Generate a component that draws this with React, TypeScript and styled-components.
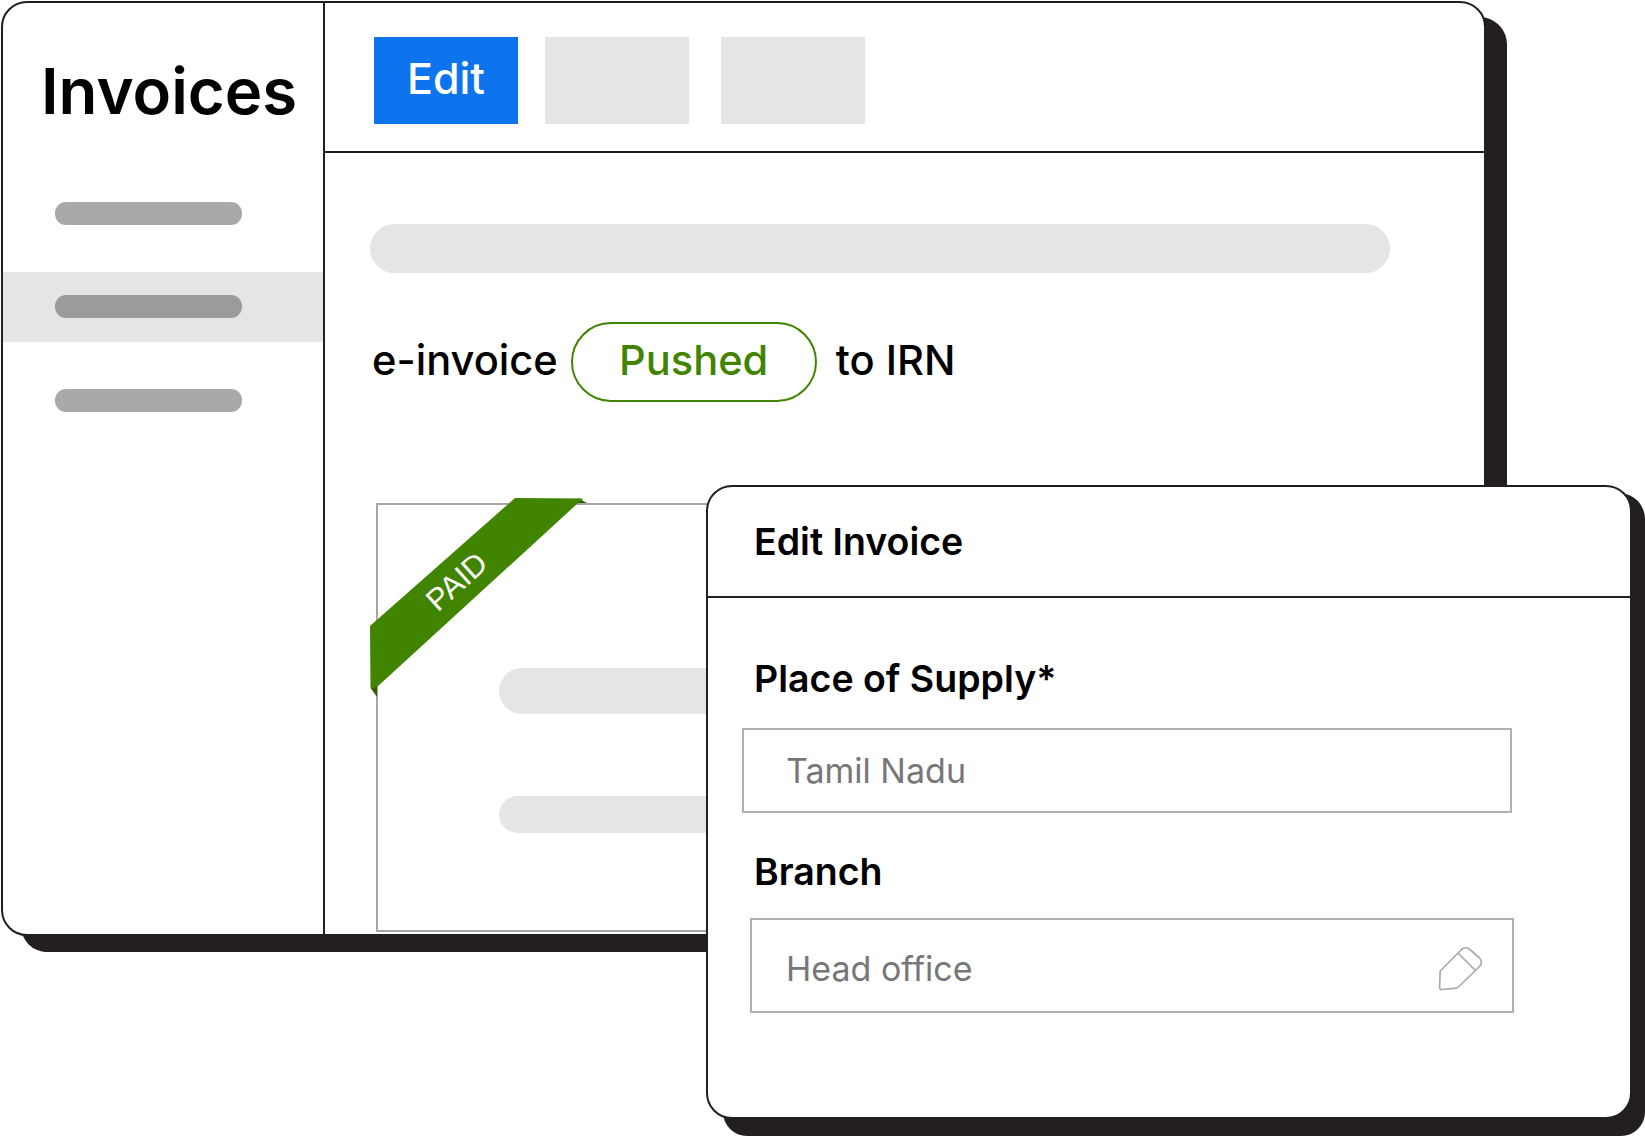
import React from 'react'
import styled, { createGlobalStyle } from 'styled-components'

const GlobalStyle = createGlobalStyle`
  html, body {
    margin: 0;
    padding: 0;
    background: #fff;
  }
  * {
    box-sizing: border-box;
  }
`

const App = () => {
  return (
    <>
      <GlobalStyle />
      <Scene>
        <MainWindow>
          <Sidebar>
            <Title>Invoices</Title>
            <NavList>
              <NavRow><NavBar /></NavRow>
              <NavRow $active><NavBar $active /></NavRow>
              <NavRow><NavBar /></NavRow>
            </NavList>
          </Sidebar>

          <Content>
            <Toolbar>
              <EditButton>Edit</EditButton>
              <GhostButton />
              <GhostButton $left={5} />
            </Toolbar>

            <Body>
              <LongBar />
              <StatusRow>
                <StatusText>e-invoice</StatusText>
                <Pill><StatusText>Pushed</StatusText></Pill>
                <StatusText>to IRN</StatusText>
              </StatusRow>

              <Paper>
                <Ribbon>
                  <svg width="222" height="205" viewBox="0 0 222 205">
                    <polygon points="208,0 217,5 205,5" fill="#2f6100" />
                    <polygon points="0.6,190 7,186 7,199" fill="#2f6100" />
                    <polygon points="145,0 213,0.5 7,189 0.5,190 0,128" fill="#418400" />
                  </svg>
                  <RibbonLabel>PAID</RibbonLabel>
                </Ribbon>
                <PaperBar $height={46} $top={163} />
                <PaperBar $height={37} $top={82} />
              </Paper>
            </Body>
          </Content>
        </MainWindow>

        <Dialog>
          <DialogHeader>Edit Invoice</DialogHeader>
          <DialogBody>
            <FieldLabel>Place of Supply*</FieldLabel>
            <Input $left={34} $width={770} $height={85}>Tamil Nadu</Input>
            <FieldLabel $top={37} $bottom={24}>Branch</FieldLabel>
            <Input $left={42} $width={764} $height={95} $drop={6}>
              Head office
              <PencilIcon viewBox="-1 -1 45 45" fill="none">
                <path d="M1.2 24 L22.5 2.5 C25 0.2 28.5 0.2 31 2.5 L40.5 11 C43 13.5 43 17 40.5 19.5 L20 39.5 C19 40.5 18 41 17 41.1 L3 42.5 C1.5 42.6 0.6 41.8 0.6 40.4 Z" />
                <path d="M19 6 L37 24" />
              </PencilIcon>
            </Input>
          </DialogBody>
        </Dialog>
      </Scene>
    </>
  )
}
export default App

const Scene = styled.div`
  position: relative;
  width: 1645px;
  height: 1136px;
  overflow: hidden;
  font-family: Inter, "Liberation Sans", sans-serif;
  color: #000;
`

const MainWindow = styled.div`
  position: absolute;
  left: 1px;
  top: 1px;
  width: 1485px;
  height: 935px;
  display: flex;
  overflow: hidden;
  background: #fff;
  border: 2px solid #231f20;
  border-radius: 26px;
  box-shadow: 20px 16px 0 0 #231f20, 22px 17px 0 -1px #231f20;
`

const Sidebar = styled.aside`
  flex: 0 0 322px;
  border-right: 2px solid #231f20;
`

const Title = styled.h1`
  margin: 0;
  padding: 50px 0 0 38px;
  height: 175px;
  font-size: 63.5px;
  line-height: 76px;
  font-weight: 600;
  letter-spacing: 0;
`

const NavList = styled.div`
  display: flex;
  flex-direction: column;
  gap: 23.5px;
`

const NavRow = styled.div<{ $active?: boolean }>`
  height: 70px;
  display: flex;
  align-items: center;
  padding-left: 52px;
  background: ${(p) => (p.$active ? '#e5e5e5' : 'transparent')};
`

const NavBar = styled.div<{ $active?: boolean }>`
  width: 187px;
  height: 23px;
  border-radius: 11px;
  background: ${(p) => (p.$active ? '#9c9a9a' : '#a9a9a9')};
`

const Content = styled.main`
  flex: 1;
  min-width: 0;
  display: flex;
  flex-direction: column;
`

const Toolbar = styled.div`
  height: 150px;
  flex: none;
  display: flex;
  align-items: flex-start;
  gap: 27px;
  padding: 34px 0 0 49px;
  border-bottom: 2px solid #231f20;
`

const EditButton = styled.button`
  width: 144px;
  height: 87px;
  padding: 0 0 6px;
  border: 0;
  background: #0d74ee;
  color: #fff;
  font-family: inherit;
  font-size: 43px;
  font-weight: 450;
`

const GhostButton = styled.div<{ $left?: number }>`
  width: 144px;
  height: 87px;
  margin-left: ${(p) => p.$left ?? 0}px;
  background: #e5e5e5;
`

const Body = styled.div`
  padding: 71px 0 0 45px;
`

const LongBar = styled.div`
  width: 1020px;
  height: 49px;
  border-radius: 25px;
  background: #e5e5e5;
`

const StatusRow = styled.div`
  margin: 49px 0 0 2px;
  height: 80px;
  display: flex;
  align-items: center;
  gap: 13px;
  font-size: 41.6px;
  font-weight: 450;
`

const StatusText = styled.span`
  margin-top: -4px;
`

const Pill = styled.span`
  width: 246px;
  height: 80px;
  margin-right: 6px;
  display: flex;
  align-items: center;
  justify-content: center;
  border: 2px solid #418400;
  border-radius: 40px;
  color: #418400;
`

const Paper = styled.div`
  position: relative;
  margin: 101px 0 0 6px;
  width: 700px;
  height: 429px;
  padding-left: 121px;
  border: 2px solid #a6a6a6;
`

const Ribbon = styled.div`
  position: absolute;
  left: -8px;
  top: -7px;
  width: 222px;
  height: 205px;
  svg {
    display: block;
  }
`

const RibbonLabel = styled.span`
  position: absolute;
  left: 45px;
  top: 66px;
  width: 84px;
  text-align: center;
  font-family: "Liberation Sans", Arial, sans-serif;
  font-size: 31px;
  line-height: 36px;
  color: #fff;
  transform: rotate(-42deg);
`

const PaperBar = styled.div<{ $height: number; $top: number }>`
  width: 450px;
  height: ${(p) => p.$height}px;
  margin-top: ${(p) => p.$top}px;
  border-radius: ${(p) => p.$height / 2}px;
  background: #e5e5e5;
`

const Dialog = styled.section`
  position: absolute;
  left: 706px;
  top: 485px;
  width: 926px;
  height: 634px;
  display: flex;
  flex-direction: column;
  overflow: hidden;
  background: #fff;
  border: 2px solid #231f20;
  border-radius: 26px;
  box-shadow: 15px 19px 0 -2px #231f20, 13px 8px 0 0 #231f20;
`

const DialogHeader = styled.h2`
  margin: 0;
  height: 111px;
  flex: none;
  display: flex;
  align-items: center;
  padding-left: 46px;
  font-size: 37.5px;
  font-weight: 600;
  border-bottom: 2px solid #231f20;
`

const DialogBody = styled.div`
  display: flex;
  flex-direction: column;
  align-items: flex-start;
  padding-top: 59px;
`

const FieldLabel = styled.label<{ $top?: number; $bottom?: number }>`
  margin: ${(p) => p.$top ?? 0}px 0 ${(p) => p.$bottom ?? 27}px 46px;
  font-size: 37.5px;
  line-height: 44px;
  font-weight: 600;
`

const Input = styled.div<{ $left: number; $width: number; $height: number; $drop?: number }>`
  margin-left: ${(p) => p.$left}px;
  width: ${(p) => p.$width}px;
  height: ${(p) => p.$height}px;
  display: flex;
  align-items: center;
  justify-content: space-between;
  padding: ${(p) => p.$drop ?? 0}px 29px 0 ${(p) => 76 - p.$left}px;
  border: 2px solid #b0b0b0;
  font-size: 34px;
  color: #777;
`

const PencilIcon = styled.svg`
  width: 45px;
  height: 45px;
  stroke: #aaa;
  stroke-width: 1.7;
  stroke-linejoin: round;
`
